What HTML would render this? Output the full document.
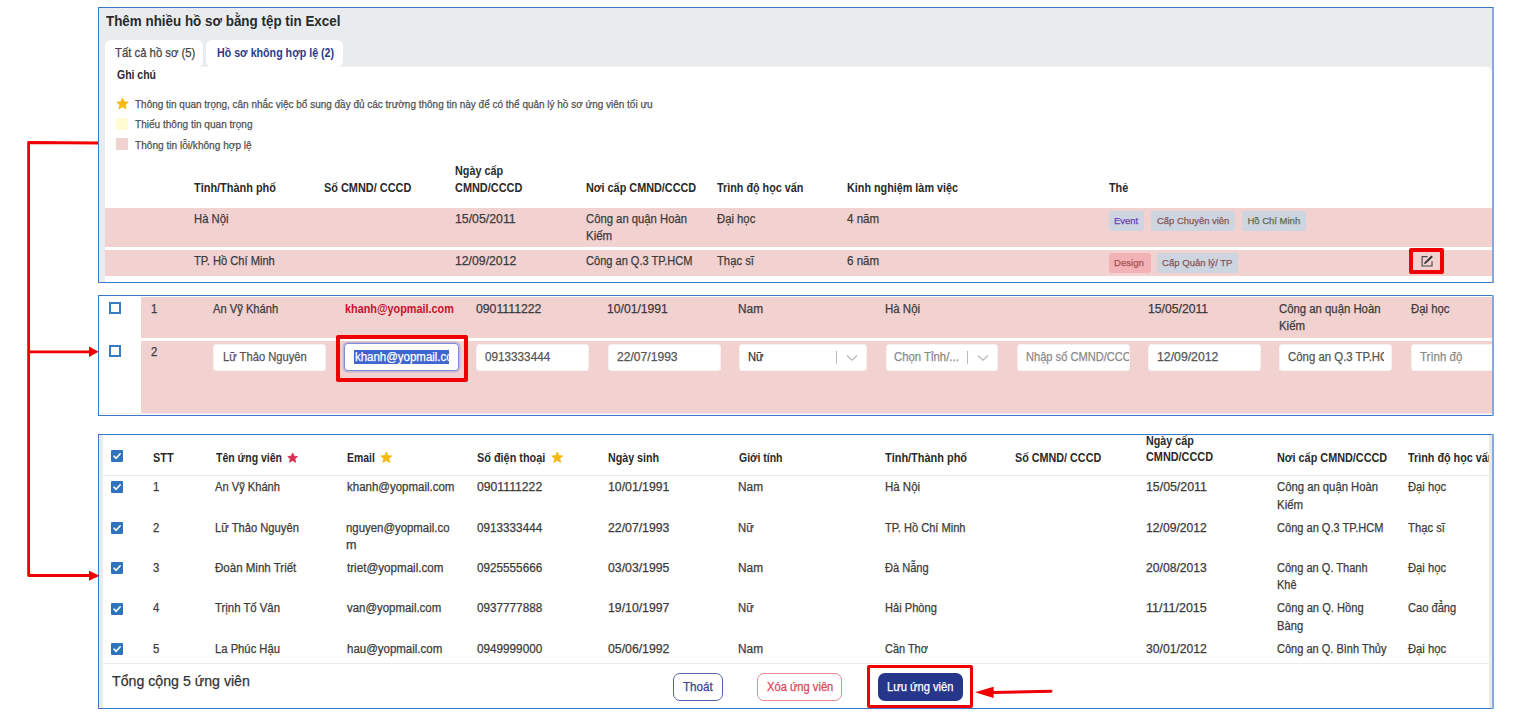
<!DOCTYPE html><html><head><meta charset="utf-8"><style>html,body{margin:0;padding:0;background:#fff;}body{width:1537px;height:714px;position:relative;overflow:hidden;font-family:"Liberation Sans", sans-serif;}.t{position:absolute;white-space:nowrap;line-height:1;transform-origin:0 0;-webkit-text-stroke:0.25px currentColor;}</style></head><body>
<div style="position:absolute;left:98px;top:7px;width:1396px;height:276px;box-sizing:border-box;border:1px solid #3b78c6;border-right:2px solid #86aadd;background:#e9ecef;"></div>
<div style="position:absolute;left:105px;top:67px;width:1387px;height:215px;background:#fff;border-top-right-radius:6px;"></div>
<div style="position:absolute;left:105px;top:66px;width:1387px;height:1px;background:#f1f3f5;border-top-right-radius:6px;"></div>
<div style="position:absolute;left:105px;top:40px;width:98px;height:27px;background:#fff;border-radius:6px 6px 6px 0;"></div>
<div style="position:absolute;left:206px;top:40px;width:137px;height:27px;background:#fff;border-radius:6px;"></div>
<svg style="position:absolute;left:116.0px;top:96.8px" width="13" height="14"><polygon points="6.50,1.00 8.09,4.82 12.21,5.15 9.07,7.83 10.03,11.85 6.50,9.70 2.97,11.85 3.93,7.83 0.79,5.15 4.91,4.82" fill="#f6b90f" stroke="#f6b90f" stroke-width="0.9" stroke-linejoin="round"/></svg>
<div style="position:absolute;left:116px;top:118px;width:12px;height:12px;background:#fffbd3;"></div>
<div style="position:absolute;left:116px;top:138px;width:12px;height:12px;background:#f2d1d1;"></div>
<div style="position:absolute;left:105px;top:208px;width:1387px;height:39px;background:#f2d1d1;"></div>
<div style="position:absolute;left:105px;top:250px;width:1387px;height:26px;background:#f2d1d1;"></div>
<div style="position:absolute;left:1108.6px;top:211px;width:35px;height:20px;background:#cdd5e1;border-radius:3px;"></div>
<div style="position:absolute;left:1150.8px;top:211px;width:84px;height:20px;background:#cdd5e1;border-radius:3px;"></div>
<div style="position:absolute;left:1241.7px;top:211px;width:64px;height:20px;background:#cdd5e1;border-radius:3px;"></div>
<div style="position:absolute;left:1108.6px;top:253px;width:42px;height:20px;background:#f3b3b6;border-radius:3px;"></div>
<div style="position:absolute;left:1157.3px;top:253px;width:81px;height:20px;background:#cdd5e1;border-radius:3px;"></div>
<svg style="position:absolute;left:1419px;top:254px" width="16" height="14"><path d="M8.6 2.6 H3.1 V12 H13 V7.2" fill="none" stroke="#4a4a4a" stroke-width="1.15"/><path d="M5.1 10 L5.6 8.2 L12.4 1.5 L13.9 3 L7 9.6 Z" fill="#333"/></svg>
<div style="position:absolute;left:98px;top:295px;width:1396px;height:121px;box-sizing:border-box;border:1px solid #3b78c6;border-right:2px solid #86aadd;background:#fff;"></div>
<div style="position:absolute;left:141px;top:297px;width:1351px;height:41px;background:#f2d1d1;"></div>
<div style="position:absolute;left:141px;top:341px;width:1351px;height:72px;background:#f2d1d1;"></div>
<div style="position:absolute;left:99px;top:413px;width:1393px;height:1px;background:#efefef;"></div>
<div style="position:absolute;left:109px;top:302px;width:12px;height:12px;box-sizing:border-box;border:2px solid #3a7cc4;"></div>
<div style="position:absolute;left:109px;top:345px;width:12px;height:12px;box-sizing:border-box;border:2px solid #3a7cc4;"></div>
<div style="position:absolute;left:213px;top:344px;width:113px;height:27px;box-sizing:border-box;background:#fff;border:1px solid #f7f1f1;border-radius:3px;"></div>
<div style="position:absolute;left:344px;top:343px;width:115px;height:28px;box-sizing:border-box;background:#fff;border:1.5px solid #7f8edb;border-radius:4px;box-shadow:0 0 0 1.5px rgba(120,130,200,0.35);"></div>
<div style="position:absolute;left:354px;top:350px;width:95px;height:14px;background:#3f66cf;"></div>
<div style="position:absolute;left:476px;top:344px;width:113px;height:27px;box-sizing:border-box;background:#fff;border:1px solid #f7f1f1;border-radius:3px;"></div>
<div style="position:absolute;left:608px;top:344px;width:113px;height:27px;box-sizing:border-box;background:#fff;border:1px solid #f7f1f1;border-radius:3px;"></div>
<div style="position:absolute;left:739px;top:344px;width:128px;height:27px;box-sizing:border-box;background:#fff;border:1px solid #f7f1f1;border-radius:3px;"></div>
<div style="position:absolute;left:836px;top:351px;width:1px;height:13px;background:#bbb;"></div>
<svg style="position:absolute;left:846px;top:354px" width="12" height="8"><path d="M1 1.5 L6 6.2 L11 1.5" fill="none" stroke="#b8b8b8" stroke-width="1.3"/></svg>
<div style="position:absolute;left:886px;top:344px;width:112px;height:27px;box-sizing:border-box;background:#fff;border:1px solid #f7f1f1;border-radius:3px;"></div>
<div style="position:absolute;left:967px;top:351px;width:1px;height:13px;background:#bbb;"></div>
<svg style="position:absolute;left:977px;top:354px" width="12" height="8"><path d="M1 1.5 L6 6.2 L11 1.5" fill="none" stroke="#b8b8b8" stroke-width="1.3"/></svg>
<div style="position:absolute;left:1017px;top:344px;width:113px;height:27px;box-sizing:border-box;background:#fff;border:1px solid #f7f1f1;border-radius:3px;"></div>
<div style="position:absolute;left:1148px;top:344px;width:113px;height:27px;box-sizing:border-box;background:#fff;border:1px solid #f7f1f1;border-radius:3px;"></div>
<div style="position:absolute;left:1279px;top:344px;width:113px;height:27px;box-sizing:border-box;background:#fff;border:1px solid #f7f1f1;border-radius:3px;"></div>
<div style="position:absolute;left:1411px;top:344px;width:113px;height:27px;box-sizing:border-box;background:#fff;border:1px solid #f7f1f1;border-radius:3px;"></div>
<div style="position:absolute;left:98px;top:434px;width:1396px;height:275px;box-sizing:border-box;border:1px solid #3b78c6;border-right:2px solid #86aadd;background:#fff;"></div>
<div style="position:absolute;left:99px;top:435px;width:4px;height:273px;background:#e9ecef;"></div>
<div style="position:absolute;left:103px;top:435px;width:5px;height:273px;background:#fff;border-radius:5px 0 0 5px;"></div>
<div style="position:absolute;left:103px;top:475px;width:1387px;height:1px;background:#e9ecef;"></div>
<div style="position:absolute;left:103px;top:663px;width:1387px;height:1px;background:#e9ecef;"></div>
<div style="position:absolute;left:111px;top:450px;width:12px;height:12px;background:#2f73bf;border-radius:1px;"><svg width="12" height="12" style="position:absolute;left:0;top:0"><path d="M3 6.2 L5.2 8.3 L9.2 3.8" fill="none" stroke="#fff" stroke-width="1.6" stroke-linecap="round" stroke-linejoin="round"/></svg></div>
<svg style="position:absolute;left:287.3px;top:451.6px" width="11.2" height="12.2"><polygon points="5.60,1.00 6.95,4.24 10.45,4.52 7.78,6.81 8.60,10.23 5.60,8.39 2.60,10.23 3.42,6.81 0.75,4.52 4.25,4.24" fill="#d9304f" stroke="#d9304f" stroke-width="0.9" stroke-linejoin="round"/></svg>
<svg style="position:absolute;left:380.1px;top:451.2px" width="12.5" height="13.5"><polygon points="6.25,1.00 7.77,4.66 11.72,4.97 8.71,7.55 9.63,11.40 6.25,9.34 2.87,11.40 3.79,7.55 0.78,4.97 4.73,4.66" fill="#f6b90f" stroke="#f6b90f" stroke-width="0.9" stroke-linejoin="round"/></svg>
<svg style="position:absolute;left:550.9px;top:451.2px" width="12.5" height="13.5"><polygon points="6.25,1.00 7.77,4.66 11.72,4.97 8.71,7.55 9.63,11.40 6.25,9.34 2.87,11.40 3.79,7.55 0.78,4.97 4.73,4.66" fill="#f6b90f" stroke="#f6b90f" stroke-width="0.9" stroke-linejoin="round"/></svg>
<div style="position:absolute;left:111px;top:481px;width:12px;height:12px;background:#2f73bf;border-radius:1px;"><svg width="12" height="12" style="position:absolute;left:0;top:0"><path d="M3 6.2 L5.2 8.3 L9.2 3.8" fill="none" stroke="#fff" stroke-width="1.6" stroke-linecap="round" stroke-linejoin="round"/></svg></div>
<div style="position:absolute;left:111px;top:522px;width:12px;height:12px;background:#2f73bf;border-radius:1px;"><svg width="12" height="12" style="position:absolute;left:0;top:0"><path d="M3 6.2 L5.2 8.3 L9.2 3.8" fill="none" stroke="#fff" stroke-width="1.6" stroke-linecap="round" stroke-linejoin="round"/></svg></div>
<div style="position:absolute;left:111px;top:562px;width:12px;height:12px;background:#2f73bf;border-radius:1px;"><svg width="12" height="12" style="position:absolute;left:0;top:0"><path d="M3 6.2 L5.2 8.3 L9.2 3.8" fill="none" stroke="#fff" stroke-width="1.6" stroke-linecap="round" stroke-linejoin="round"/></svg></div>
<div style="position:absolute;left:111px;top:603px;width:12px;height:12px;background:#2f73bf;border-radius:1px;"><svg width="12" height="12" style="position:absolute;left:0;top:0"><path d="M3 6.2 L5.2 8.3 L9.2 3.8" fill="none" stroke="#fff" stroke-width="1.6" stroke-linecap="round" stroke-linejoin="round"/></svg></div>
<div style="position:absolute;left:111px;top:643px;width:12px;height:12px;background:#2f73bf;border-radius:1px;"><svg width="12" height="12" style="position:absolute;left:0;top:0"><path d="M3 6.2 L5.2 8.3 L9.2 3.8" fill="none" stroke="#fff" stroke-width="1.6" stroke-linecap="round" stroke-linejoin="round"/></svg></div>
<div style="position:absolute;left:673px;top:673px;width:50px;height:28px;box-sizing:border-box;border:1px solid #5563a8;border-radius:7px;background:#fff;"></div>
<div style="position:absolute;left:757px;top:673px;width:85px;height:28px;box-sizing:border-box;border:1px solid #ea8794;border-radius:7px;background:#fff;"></div>
<div style="position:absolute;left:878px;top:673px;width:85px;height:28px;background:#26368a;border-radius:7px;"></div>
<div class="t" id="t0" style="left:105.7px;top:12.85px;font-size:15.3px;color:#2a2a2a;font-weight:700;-webkit-text-stroke:0;transform:scaleX(0.8761);">Thêm nhiều hồ sơ bằng tệp tin Excel</div>
<div class="t" id="t1" style="left:114.5px;top:47.42px;font-size:12.5px;color:#444;transform:scaleX(0.9054);">Tất cả hồ sơ (5)</div>
<div class="t" id="t2" style="left:216.5px;top:47.42px;font-size:12.5px;color:#2b3a8e;font-weight:700;-webkit-text-stroke:0;transform:scaleX(0.8533);">Hồ sơ không hợp lệ (2)</div>
<div class="t" id="t3" style="left:117.3px;top:68.84px;font-size:12px;color:#2a2a2a;font-weight:700;-webkit-text-stroke:0;transform:scaleX(0.8708);">Ghi chú</div>
<div class="t" id="t4" style="left:135.2px;top:99.09px;font-size:11px;color:#505050;transform:scaleX(0.9065);">Thông tin quan trọng, cân nhắc việc bổ sung đầy đủ các trường thông tin này để có thể quản lý hồ sơ ứng viên tối ưu</div>
<div class="t" id="t5" style="left:135.2px;top:119.29px;font-size:11px;color:#505050;transform:scaleX(0.9148);">Thiếu thông tin quan trọng</div>
<div class="t" id="t6" style="left:135.2px;top:139.69px;font-size:11px;color:#505050;transform:scaleX(0.9183);">Thông tin lỗi/không hợp lệ</div>
<div class="t" id="t7" style="left:194.4px;top:181.84px;font-size:12px;color:#2a2a2a;font-weight:700;-webkit-text-stroke:0;transform:scaleX(0.9102);">Tỉnh/Thành phố</div>
<div class="t" id="t8" style="left:323.9px;top:181.84px;font-size:12px;color:#2a2a2a;font-weight:700;-webkit-text-stroke:0;transform:scaleX(0.9094);">Số CMND/ CCCD</div>
<div class="t" id="t9" style="left:455.0px;top:164.64px;font-size:12px;color:#2a2a2a;font-weight:700;-webkit-text-stroke:0;transform:scaleX(0.8996);">Ngày cấp</div>
<div class="t" id="t10" style="left:455.0px;top:181.84px;font-size:12px;color:#2a2a2a;font-weight:700;-webkit-text-stroke:0;transform:scaleX(0.9095);">CMND/CCCD</div>
<div class="t" id="t11" style="left:585.8px;top:181.84px;font-size:12px;color:#2a2a2a;font-weight:700;-webkit-text-stroke:0;transform:scaleX(0.9042);">Nơi cấp CMND/CCCD</div>
<div class="t" id="t12" style="left:716.9px;top:181.84px;font-size:12px;color:#2a2a2a;font-weight:700;-webkit-text-stroke:0;transform:scaleX(0.8999);">Trình độ học vấn</div>
<div class="t" id="t13" style="left:847.0px;top:181.84px;font-size:12px;color:#2a2a2a;font-weight:700;-webkit-text-stroke:0;transform:scaleX(0.8997);">Kinh nghiệm làm việc</div>
<div class="t" id="t14" style="left:1108.8px;top:182.14px;font-size:12px;color:#2a2a2a;font-weight:700;-webkit-text-stroke:0;transform:scaleX(0.9000);">Thẻ</div>
<div class="t" id="t15" style="left:194.0px;top:213.04px;font-size:12px;color:#3c3c3c;transform:scaleX(0.9376);">Hà Nội</div>
<div class="t" id="t16" style="left:455.0px;top:213.04px;font-size:12px;color:#3c3c3c;transform:scaleX(1.0258);">15/05/2011</div>
<div class="t" id="t17" style="left:585.8px;top:213.14px;font-size:12px;color:#3c3c3c;transform:scaleX(0.9402);">Công an quận Hoàn</div>
<div class="t" id="t18" style="left:585.8px;top:230.34px;font-size:12px;color:#3c3c3c;transform:scaleX(0.9582);">Kiếm</div>
<div class="t" id="t19" style="left:716.9px;top:213.14px;font-size:12px;color:#3c3c3c;transform:scaleX(0.9413);">Đại học</div>
<div class="t" id="t20" style="left:847.0px;top:213.14px;font-size:12px;color:#3c3c3c;transform:scaleX(0.9652);">4 năm</div>
<div class="t" id="t21" style="left:1114.3px;top:216.16px;font-size:9.5px;color:#6a3fb5;transform:scaleX(0.9919);">Event</div>
<div class="t" id="t22" style="left:1156.5px;top:216.16px;font-size:9.5px;color:#8b5656;transform:scaleX(0.9919);">Cấp Chuyên viên</div>
<div class="t" id="t23" style="left:1247.4px;top:216.16px;font-size:9.5px;color:#5b6f4f;">Hồ Chí Minh</div>
<div class="t" id="t24" style="left:194.0px;top:255.14px;font-size:12px;color:#3c3c3c;transform:scaleX(0.9271);">TP. Hồ Chí Minh</div>
<div class="t" id="t25" style="left:455.0px;top:255.14px;font-size:12px;color:#3c3c3c;transform:scaleX(1.0206);">12/09/2012</div>
<div class="t" id="t26" style="left:585.8px;top:255.14px;font-size:12px;color:#3c3c3c;transform:scaleX(0.9211);">Công an Q.3 TP.HCM</div>
<div class="t" id="t27" style="left:716.9px;top:255.14px;font-size:12px;color:#3c3c3c;transform:scaleX(0.9375);">Thạc sĩ</div>
<div class="t" id="t28" style="left:847.0px;top:255.14px;font-size:12px;color:#3c3c3c;transform:scaleX(0.9652);">6 năm</div>
<div class="t" id="t29" style="left:1114.3px;top:258.16px;font-size:9.5px;color:#a35353;transform:scaleX(1.0075);">Design</div>
<div class="t" id="t30" style="left:1162.3px;top:258.16px;font-size:9.5px;color:#8b5656;transform:scaleX(1.0062);">Cấp Quản lý/ TP</div>
<div class="t" id="t31" style="left:151.0px;top:302.64px;font-size:12px;color:#3c3c3c;transform:scaleX(0.9500);">1</div>
<div class="t" id="t32" style="left:213.1px;top:302.84px;font-size:12px;color:#3c3c3c;transform:scaleX(0.9306);">An Vỹ Khánh</div>
<div class="t" id="t33" style="left:344.8px;top:302.84px;font-size:12px;color:#c8102e;font-weight:700;-webkit-text-stroke:0;transform:scaleX(0.9036);">khanh@yopmail.com</div>
<div class="t" id="t34" style="left:475.8px;top:302.74px;font-size:12px;color:#3c3c3c;transform:scaleX(1.0206);">0901111222</div>
<div class="t" id="t35" style="left:607.4px;top:302.74px;font-size:12px;color:#3c3c3c;transform:scaleX(1.0123);">10/01/1991</div>
<div class="t" id="t36" style="left:738.4px;top:302.74px;font-size:12px;color:#3c3c3c;transform:scaleX(0.9864);">Nam</div>
<div class="t" id="t37" style="left:884.7px;top:302.74px;font-size:12px;color:#3c3c3c;transform:scaleX(0.9567);">Hà Nội</div>
<div class="t" id="t38" style="left:1148.3px;top:302.64px;font-size:12px;color:#3c3c3c;transform:scaleX(1.0157);">15/05/2011</div>
<div class="t" id="t39" style="left:1279.4px;top:302.64px;font-size:12px;color:#3c3c3c;transform:scaleX(0.9449);">Công an quận Hoàn</div>
<div class="t" id="t40" style="left:1279.4px;top:320.14px;font-size:12px;color:#3c3c3c;transform:scaleX(0.9509);">Kiếm</div>
<div class="t" id="t41" style="left:1410.8px;top:302.64px;font-size:12px;color:#3c3c3c;transform:scaleX(0.9438);">Đại học</div>
<div class="t" id="t42" style="left:151.0px;top:345.74px;font-size:12px;color:#3c3c3c;transform:scaleX(0.9500);">2</div>
<div class="t" id="t43" style="left:222.8px;top:350.64px;font-size:12px;color:#555;transform:scaleX(0.9324);">Lữ Thảo Nguyên</div>
<div style="position:absolute;left:354px;top:346.64px;width:95px;height:20px;overflow:hidden"><div class="t" id="t44" style="left:0.5px;top:4.00px;font-size:12px;color:#fff;transform:scaleX(0.9550);">khanh@yopmail.com</div></div>
<div class="t" id="t45" style="left:485.0px;top:350.64px;font-size:12px;color:#555;transform:scaleX(0.9768);">0913333444</div>
<div class="t" id="t46" style="left:617.0px;top:350.64px;font-size:12px;color:#555;transform:scaleX(1.0089);">22/07/1993</div>
<div class="t" id="t47" style="left:747.6px;top:350.64px;font-size:12px;color:#333;transform:scaleX(0.9340);">Nữ</div>
<div class="t" id="t48" style="left:894.0px;top:350.64px;font-size:12px;color:#8a8a8a;transform:scaleX(0.9462);">Chọn Tỉnh/...</div>
<div style="position:absolute;left:1018px;top:346.64px;width:111px;height:20px;overflow:hidden"><div class="t" id="t49" style="left:7.6px;top:4.00px;font-size:12px;color:#8a8a8a;transform:scaleX(0.9250);">Nhập số CMND/CCCD</div></div>
<div class="t" id="t50" style="left:1157.4px;top:350.64px;font-size:12px;color:#555;transform:scaleX(1.0223);">12/09/2012</div>
<div style="position:absolute;left:1280px;top:346.64px;width:104px;height:20px;overflow:hidden"><div class="t" id="t51" style="left:8.1px;top:4.00px;font-size:12px;color:#555;transform:scaleX(0.9500);">Công an Q.3 TP.HCM</div></div>
<div class="t" id="t52" style="left:1419.9px;top:350.64px;font-size:12px;color:#8a8a8a;transform:scaleX(0.9559);">Trình độ</div>
<div class="t" id="t53" style="left:153.4px;top:451.74px;font-size:12px;color:#2a2a2a;font-weight:700;-webkit-text-stroke:0;transform:scaleX(0.9086);">STT</div>
<div class="t" id="t54" style="left:216.0px;top:451.74px;font-size:12px;color:#2a2a2a;font-weight:700;-webkit-text-stroke:0;transform:scaleX(0.8756);">Tên ứng viên</div>
<div class="t" id="t55" style="left:346.6px;top:451.74px;font-size:12px;color:#2a2a2a;font-weight:700;-webkit-text-stroke:0;transform:scaleX(0.8714);">Email</div>
<div class="t" id="t56" style="left:476.8px;top:451.74px;font-size:12px;color:#2a2a2a;font-weight:700;-webkit-text-stroke:0;transform:scaleX(0.9065);">Số điện thoại</div>
<div class="t" id="t57" style="left:608.2px;top:451.74px;font-size:12px;color:#2a2a2a;font-weight:700;-webkit-text-stroke:0;transform:scaleX(0.8909);">Ngày sinh</div>
<div class="t" id="t58" style="left:738.5px;top:451.74px;font-size:12px;color:#2a2a2a;font-weight:700;-webkit-text-stroke:0;transform:scaleX(0.8725);">Giới tính</div>
<div class="t" id="t59" style="left:884.9px;top:451.74px;font-size:12px;color:#2a2a2a;font-weight:700;-webkit-text-stroke:0;transform:scaleX(0.9113);">Tỉnh/Thành phố</div>
<div class="t" id="t60" style="left:1015.2px;top:451.74px;font-size:12px;color:#2a2a2a;font-weight:700;-webkit-text-stroke:0;transform:scaleX(0.8979);">Số CMND/ CCCD</div>
<div class="t" id="t61" style="left:1146.0px;top:434.84px;font-size:12px;color:#2a2a2a;font-weight:700;-webkit-text-stroke:0;transform:scaleX(0.8958);">Ngày cấp</div>
<div class="t" id="t62" style="left:1146.0px;top:451.04px;font-size:12px;color:#2a2a2a;font-weight:700;-webkit-text-stroke:0;transform:scaleX(0.9054);">CMND/CCCD</div>
<div class="t" id="t63" style="left:1276.5px;top:451.74px;font-size:12px;color:#2a2a2a;font-weight:700;-webkit-text-stroke:0;transform:scaleX(0.9042);">Nơi cấp CMND/CCCD</div>
<div class="t" id="t64" style="left:1407.7px;top:451.74px;font-size:12px;color:#2a2a2a;font-weight:700;-webkit-text-stroke:0;transform:scaleX(0.9000);">Trình độ học vấn</div>
<div class="t" id="t65" style="left:153.4px;top:481.34px;font-size:12px;color:#3c3c3c;transform:scaleX(0.9500);">1</div>
<div class="t" id="t66" style="left:215.4px;top:481.34px;font-size:12px;color:#3c3c3c;transform:scaleX(0.9277);">An Vỹ Khánh</div>
<div class="t" id="t67" style="left:346.6px;top:481.34px;font-size:12px;color:#3c3c3c;transform:scaleX(0.9569);">khanh@yopmail.com</div>
<div class="t" id="t68" style="left:476.8px;top:481.34px;font-size:12px;color:#3c3c3c;transform:scaleX(1.0175);">0901111222</div>
<div class="t" id="t69" style="left:607.6px;top:481.34px;font-size:12px;color:#3c3c3c;transform:scaleX(1.0223);">10/01/1991</div>
<div class="t" id="t70" style="left:738.4px;top:481.34px;font-size:12px;color:#3c3c3c;transform:scaleX(0.9864);">Nam</div>
<div class="t" id="t71" style="left:884.7px;top:481.34px;font-size:12px;color:#3c3c3c;transform:scaleX(0.9567);">Hà Nội</div>
<div class="t" id="t72" style="left:1146.0px;top:481.34px;font-size:12px;color:#3c3c3c;transform:scaleX(1.0275);">15/05/2011</div>
<div class="t" id="t73" style="left:1276.5px;top:481.34px;font-size:12px;color:#3c3c3c;transform:scaleX(0.9411);">Công an quận Hoàn</div>
<div class="t" id="t74" style="left:1276.5px;top:498.64px;font-size:12px;color:#3c3c3c;transform:scaleX(0.9545);">Kiếm</div>
<div class="t" id="t75" style="left:1407.7px;top:481.34px;font-size:12px;color:#3c3c3c;transform:scaleX(0.9339);">Đại học</div>
<div class="t" id="t76" style="left:153.4px;top:521.64px;font-size:12px;color:#3c3c3c;transform:scaleX(0.9500);">2</div>
<div class="t" id="t77" style="left:215.4px;top:521.64px;font-size:12px;color:#3c3c3c;transform:scaleX(0.9335);">Lữ Thảo Nguyên</div>
<div class="t" id="t78" style="left:346.4px;top:521.64px;font-size:12px;color:#3c3c3c;transform:scaleX(0.9502);">nguyen@yopmail.co</div>
<div class="t" id="t79" style="left:346.4px;top:538.94px;font-size:12px;color:#3c3c3c;transform:scaleX(1.0500);">m</div>
<div class="t" id="t80" style="left:476.8px;top:521.64px;font-size:12px;color:#3c3c3c;transform:scaleX(0.9768);">0913333444</div>
<div class="t" id="t81" style="left:607.6px;top:521.64px;font-size:12px;color:#3c3c3c;transform:scaleX(1.0223);">22/07/1993</div>
<div class="t" id="t82" style="left:738.4px;top:521.64px;font-size:12px;color:#3c3c3c;transform:scaleX(0.9399);">Nữ</div>
<div class="t" id="t83" style="left:884.7px;top:521.64px;font-size:12px;color:#3c3c3c;transform:scaleX(0.9236);">TP. Hồ Chí Minh</div>
<div class="t" id="t84" style="left:1146.0px;top:521.64px;font-size:12px;color:#3c3c3c;transform:scaleX(1.0123);">12/09/2012</div>
<div class="t" id="t85" style="left:1276.5px;top:521.64px;font-size:12px;color:#3c3c3c;transform:scaleX(0.9211);">Công an Q.3 TP.HCM</div>
<div class="t" id="t86" style="left:1407.7px;top:521.64px;font-size:12px;color:#3c3c3c;transform:scaleX(0.9401);">Thạc sĩ</div>
<div class="t" id="t87" style="left:153.4px;top:561.94px;font-size:12px;color:#3c3c3c;transform:scaleX(0.9500);">3</div>
<div class="t" id="t88" style="left:215.4px;top:561.94px;font-size:12px;color:#3c3c3c;transform:scaleX(0.9598);">Đoàn Minh Triết</div>
<div class="t" id="t89" style="left:346.6px;top:561.94px;font-size:12px;color:#3c3c3c;transform:scaleX(0.9694);">triet@yopmail.com</div>
<div class="t" id="t90" style="left:476.8px;top:561.94px;font-size:12px;color:#3c3c3c;transform:scaleX(0.9768);">0925555666</div>
<div class="t" id="t91" style="left:607.6px;top:561.94px;font-size:12px;color:#3c3c3c;transform:scaleX(1.0223);">03/03/1995</div>
<div class="t" id="t92" style="left:738.4px;top:561.94px;font-size:12px;color:#3c3c3c;transform:scaleX(0.9864);">Nam</div>
<div class="t" id="t93" style="left:884.7px;top:561.94px;font-size:12px;color:#3c3c3c;transform:scaleX(0.9224);">Đà Nẵng</div>
<div class="t" id="t94" style="left:1146.0px;top:561.94px;font-size:12px;color:#3c3c3c;transform:scaleX(1.0123);">20/08/2013</div>
<div class="t" id="t95" style="left:1276.5px;top:561.94px;font-size:12px;color:#3c3c3c;transform:scaleX(0.9197);">Công an Q. Thanh</div>
<div class="t" id="t96" style="left:1276.5px;top:579.24px;font-size:12px;color:#3c3c3c;transform:scaleX(0.9129);">Khê</div>
<div class="t" id="t97" style="left:1407.7px;top:561.94px;font-size:12px;color:#3c3c3c;transform:scaleX(0.9339);">Đại học</div>
<div class="t" id="t98" style="left:153.4px;top:602.24px;font-size:12px;color:#3c3c3c;transform:scaleX(0.9500);">4</div>
<div class="t" id="t99" style="left:215.4px;top:602.24px;font-size:12px;color:#3c3c3c;transform:scaleX(0.9461);">Trịnh Tố Vân</div>
<div class="t" id="t100" style="left:346.6px;top:602.24px;font-size:12px;color:#3c3c3c;transform:scaleX(0.9526);">van@yopmail.com</div>
<div class="t" id="t101" style="left:476.8px;top:602.24px;font-size:12px;color:#3c3c3c;transform:scaleX(0.9768);">0937777888</div>
<div class="t" id="t102" style="left:607.6px;top:602.24px;font-size:12px;color:#3c3c3c;transform:scaleX(1.0223);">19/10/1997</div>
<div class="t" id="t103" style="left:738.4px;top:602.24px;font-size:12px;color:#3c3c3c;transform:scaleX(0.9399);">Nữ</div>
<div class="t" id="t104" style="left:884.7px;top:602.24px;font-size:12px;color:#3c3c3c;transform:scaleX(0.9260);">Hải Phòng</div>
<div class="t" id="t105" style="left:1146.0px;top:602.24px;font-size:12px;color:#3c3c3c;transform:scaleX(1.0432);">11/11/2015</div>
<div class="t" id="t106" style="left:1276.5px;top:602.24px;font-size:12px;color:#3c3c3c;transform:scaleX(0.9271);">Công an Q. Hồng</div>
<div class="t" id="t107" style="left:1276.5px;top:619.54px;font-size:12px;color:#3c3c3c;transform:scaleX(0.9311);">Bàng</div>
<div class="t" id="t108" style="left:1407.7px;top:602.24px;font-size:12px;color:#3c3c3c;transform:scaleX(0.9261);">Cao đẳng</div>
<div class="t" id="t109" style="left:153.4px;top:642.54px;font-size:12px;color:#3c3c3c;transform:scaleX(0.9500);">5</div>
<div class="t" id="t110" style="left:215.4px;top:642.54px;font-size:12px;color:#3c3c3c;transform:scaleX(0.9367);">La Phúc Hậu</div>
<div class="t" id="t111" style="left:346.6px;top:642.54px;font-size:12px;color:#3c3c3c;transform:scaleX(0.9562);">hau@yopmail.com</div>
<div class="t" id="t112" style="left:476.8px;top:642.54px;font-size:12px;color:#3c3c3c;transform:scaleX(0.9768);">0949999000</div>
<div class="t" id="t113" style="left:607.6px;top:642.54px;font-size:12px;color:#3c3c3c;transform:scaleX(1.0223);">05/06/1992</div>
<div class="t" id="t114" style="left:738.4px;top:642.54px;font-size:12px;color:#3c3c3c;transform:scaleX(0.9864);">Nam</div>
<div class="t" id="t115" style="left:884.7px;top:642.54px;font-size:12px;color:#3c3c3c;transform:scaleX(0.9125);">Cần Thơ</div>
<div class="t" id="t116" style="left:1146.0px;top:642.54px;font-size:12px;color:#3c3c3c;transform:scaleX(1.0123);">30/01/2012</div>
<div class="t" id="t117" style="left:1276.5px;top:642.54px;font-size:12px;color:#3c3c3c;transform:scaleX(0.9179);">Công an Q. Bình Thủy</div>
<div class="t" id="t118" style="left:1407.7px;top:642.54px;font-size:12px;color:#3c3c3c;transform:scaleX(0.9339);">Đại học</div>
<div class="t" id="t119" style="left:111.6px;top:673.40px;font-size:15px;color:#333;transform:scaleX(0.9446);">Tổng cộng 5 ứng viên</div>
<div class="t" id="t120" style="left:683.4px;top:680.74px;font-size:12px;color:#33439a;transform:scaleX(0.9678);">Thoát</div>
<div class="t" id="t121" style="left:766.7px;top:680.74px;font-size:12px;color:#d9475b;transform:scaleX(0.9283);">Xóa ứng viên</div>
<div class="t" id="t122" style="left:887.0px;top:680.84px;font-size:12px;color:#fff;transform:scaleX(0.9293);">Lưu ứng viên</div>
<div style="position:absolute;left:1489px;top:435px;width:3px;height:273px;background:#e9ecef;"></div>
<div style="position:absolute;left:1494px;top:290px;width:43px;height:424px;background:#fff;"></div>
<div style="position:absolute;left:1492px;top:295px;width:2px;height:121px;background:#86aadd;"></div>
<div style="position:absolute;left:1492px;top:434px;width:2px;height:275px;background:#86aadd;"></div>
<div style="position:absolute;left:1409px;top:248px;width:35px;height:26px;box-sizing:border-box;border:4px solid #f00000;border-radius:2px;"></div>
<div style="position:absolute;left:336px;top:335px;width:132px;height:47px;box-sizing:border-box;border:4px solid #f00000;border-radius:2px;"></div>
<div style="position:absolute;left:867px;top:665px;width:106px;height:43px;box-sizing:border-box;border:3.5px solid #f00000;border-radius:2px;"></div>
<svg style="position:absolute;left:0;top:0" width="1537" height="714">
<g stroke="#f00000" stroke-width="2.8" fill="none" stroke-linejoin="round">
<path d="M98 143 L28.6 142.5 L28.6 575.5 L90 575.5"/>
<path d="M28.6 351.8 L90 351.8"/>
<path d="M993 692.4 L1051 691.3" stroke-linecap="round" stroke-width="3"/>
</g>
<g fill="#f00000">
<polygon points="89,346.6 98.6,351.8 89,357"/>
<polygon points="89,570.7 99.6,575.7 89,580.8"/>
<polygon points="975,692.3 993.6,686.8 993.6,698"/>
</g>
</svg>
</body></html>
